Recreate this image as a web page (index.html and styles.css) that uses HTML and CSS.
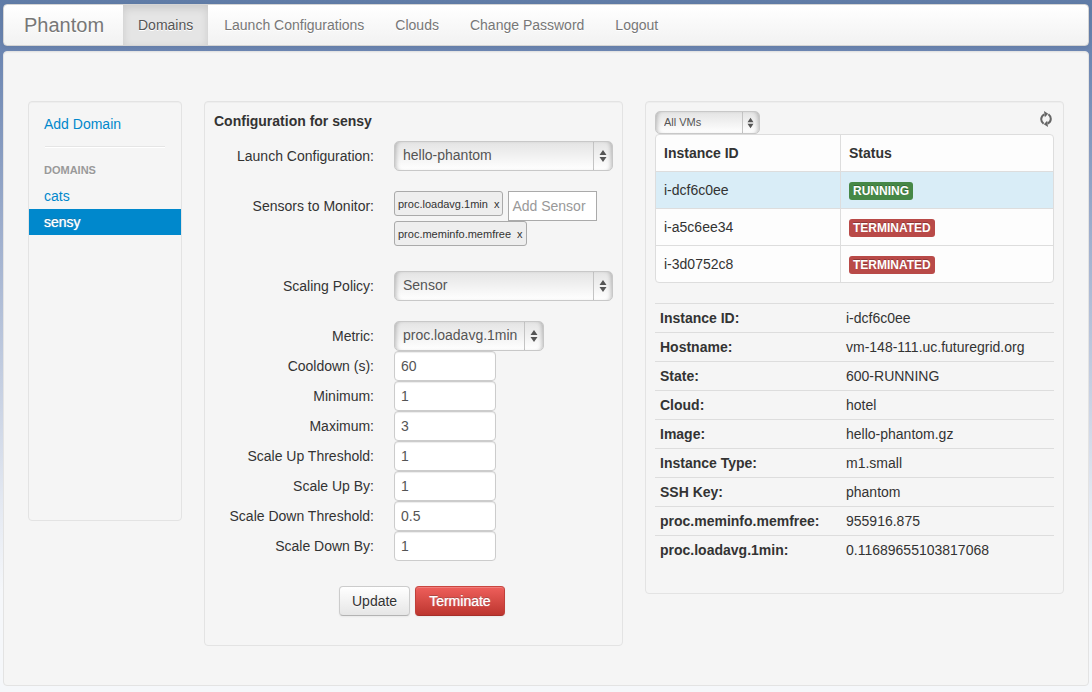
FILE: index.html
```html
<!DOCTYPE html>
<html lang="en">
<head>
<meta charset="utf-8">
<title>Phantom</title>
<link rel="stylesheet" href="styles.css">
</head>
<body>
<header class="navbar">
  <a class="brand" href="#">Phantom</a>
  <nav class="nav">
    <a class="nav-link active" href="#">Domains</a>
    <a class="nav-link" href="#">Launch Configurations</a>
    <a class="nav-link" href="#">Clouds</a>
    <a class="nav-link" href="#">Change Password</a>
    <a class="nav-link" href="#">Logout</a>
  </nav>
</header>

<main class="page">
  <aside class="panel sidebar">
    <a class="side-link" href="#">Add Domain</a>
    <hr class="divider">
    <h2 class="side-header">Domains</h2>
    <a class="side-link" href="#">cats</a>
    <a class="side-link active" href="#">sensy</a>
  </aside>

  <form class="panel config">
    <h1 class="config-title">Configuration for sensy</h1>
    <div class="row spaced">
      <label class="label" for="launch">Launch Configuration:</label>
      <span class="select">
        <select id="launch"><option>hello-phantom</option></select>
        <svg class="arrows" viewBox="0 0 8 14"><path d="M4 1l3.500 5H.5zM4 13l3.500-5H.5z"/></svg>
      </span>
    </div>
    <div class="row spaced">
      <label class="label" for="sensor">Sensors to Monitor:</label>
      <div class="tags">
        <span class="tag">proc.loadavg.1min <button class="tag-remove" type="button" aria-label="Remove proc.loadavg.1min">x</button></span>
        <input class="tag-input" id="sensor" type="text" placeholder="Add Sensor">
        <span class="tag">proc.meminfo.memfree <button class="tag-remove" type="button" aria-label="Remove proc.meminfo.memfree">x</button></span>
      </div>
    </div>
    <div class="row spaced">
      <label class="label" for="policy">Scaling Policy:</label>
      <span class="select">
        <select id="policy"><option>Sensor</option></select>
        <svg class="arrows" viewBox="0 0 8 14"><path d="M4 1l3.500 5H.5zM4 13l3.500-5H.5z"/></svg>
      </span>
    </div>
    <div class="row">
      <label class="label" for="metric">Metric:</label>
      <span class="select select-metric">
        <select id="metric"><option>proc.loadavg.1min</option></select>
        <svg class="arrows" viewBox="0 0 8 14"><path d="M4 1l3.500 5H.5zM4 13l3.500-5H.5z"/></svg>
      </span>
    </div>
    <div class="row">
      <label class="label" for="cooldown">Cooldown (s):</label>
      <input class="field" id="cooldown" type="text" value="60">
    </div>
    <div class="row">
      <label class="label" for="minimum">Minimum:</label>
      <input class="field" id="minimum" type="text" value="1">
    </div>
    <div class="row">
      <label class="label" for="maximum">Maximum:</label>
      <input class="field" id="maximum" type="text" value="3">
    </div>
    <div class="row">
      <label class="label" for="up-threshold">Scale Up Threshold:</label>
      <input class="field" id="up-threshold" type="text" value="1">
    </div>
    <div class="row">
      <label class="label" for="up-by">Scale Up By:</label>
      <input class="field" id="up-by" type="text" value="1">
    </div>
    <div class="row">
      <label class="label" for="down-threshold">Scale Down Threshold:</label>
      <input class="field" id="down-threshold" type="text" value="0.5">
    </div>
    <div class="row">
      <label class="label" for="down-by">Scale Down By:</label>
      <input class="field" id="down-by" type="text" value="1">
    </div>
    <div class="actions">
      <button class="btn" type="button">Update</button>
      <button class="btn btn-danger" type="button">Terminate</button>
    </div>
  </form>

  <section class="panel instances">
    <div class="toolbar">
      <span class="select select-small">
        <select aria-label="Filter VMs"><option>All VMs</option></select>
        <svg class="arrows" viewBox="0 0 8 14"><path d="M4 1l3.500 5H.5zM4 13l3.500-5H.5z"/></svg>
      </span>
      <button class="refresh" type="button" aria-label="Refresh">
        <svg viewBox="0 0 14 16" width="14" height="16">
          <path class="arc" d="M3.600 12.800C.2 10.200.4 5.400 4.400 3.300M8.400 3.200C11.800 5.800 11.600 10.600 7.600 12.700"/>
          <path class="head" d="M4 0L8.200 2.800 4.800 6.200zM8 16L3.800 13.200 7.200 9.800z"/>
        </svg>
      </button>
    </div>
    <table class="vm-table">
      <thead>
        <tr><th>Instance ID</th><th>Status</th></tr>
      </thead>
      <tbody>
        <tr class="selected"><td>i-dcf6c0ee</td><td><span class="badge badge-ok">RUNNING</span></td></tr>
        <tr><td>i-a5c6ee34</td><td><span class="badge">TERMINATED</span></td></tr>
        <tr><td>i-3d0752c8</td><td><span class="badge">TERMINATED</span></td></tr>
      </tbody>
    </table>
    <table class="details">
      <tbody>
        <tr><th>Instance ID:</th><td>i-dcf6c0ee</td></tr>
        <tr><th>Hostname:</th><td>vm-148-111.uc.futuregrid.org</td></tr>
        <tr><th>State:</th><td>600-RUNNING</td></tr>
        <tr><th>Cloud:</th><td>hotel</td></tr>
        <tr><th>Image:</th><td>hello-phantom.gz</td></tr>
        <tr><th>Instance Type:</th><td>m1.small</td></tr>
        <tr><th>SSH Key:</th><td>phantom</td></tr>
        <tr><th>proc.meminfo.memfree:</th><td>955916.875</td></tr>
        <tr><th>proc.loadavg.1min:</th><td>0.11689655103817068</td></tr>
      </tbody>
    </table>
  </section>
</main>
</body>
</html>
```
FILE: styles.css
```css
* {
  box-sizing: border-box;
}

body {
  margin: 0;
  padding: 4px 3px 6px;
  font: 14px/20px "Liberation Sans", Arial, sans-serif;
  color: #333;
  background: #f5f7fa linear-gradient(#607ca7 0, #6b85b1 50px, #a0b0ce 240px, #e3e8f1 500px, #f5f7fa 590px) no-repeat;
}

a {
  color: #08c;
  text-decoration: none;
}

input,
select,
button {
  margin: 0;
  font: inherit;
  color: #555;
}

.navbar {
  display: flex;
  height: 42px;
  margin-bottom: 5px;
  border: 1px solid #d4d4d4;
  border-radius: 4px;
  background: linear-gradient(#fff, #f2f2f2);
  box-shadow: 0 1px 4px rgba(0, 0, 0, 0.07);
}

.brand {
  width: 119px;
  padding: 10px 0 10px 20px;
  font-size: 20px;
  color: #777;
  text-shadow: 0 1px 0 #fff;
}

.nav {
  display: flex;
  gap: 1px;
}

.nav-link {
  padding: 10px 15px;
  color: #777;
  text-shadow: 0 1px 0 #fff;
}

.nav-link.active {
  color: #555;
  background: #e5e5e5;
  box-shadow: inset 0 3px 8px rgba(0, 0, 0, 0.125);
}

.page,
.panel {
  border: 1px solid #e3e3e3;
  border-radius: 4px;
  background: #f5f5f5;
  box-shadow: inset 0 1px 1px rgba(0, 0, 0, 0.03);
}

.page {
  display: grid;
  grid-template-columns: 154fr 419fr 419fr;
  gap: 22px;
  align-items: start;
  padding: 49px 24px 39px;
}

.panel {
  min-width: 0;
  padding: 9px;
}

.sidebar {
  min-height: 420px;
  padding: 9px 0;
}

.side-link,
.side-header {
  display: block;
  margin: 0;
  padding: 3px 15px;
}

.side-link.active {
  color: #fff;
  background: #08c;
  text-shadow: 0 -1px 0 rgba(0, 0, 0, 0.2), 0 0 1px #fff;
}

.side-header {
  font-size: 11px;
  line-height: 20px;
  color: #999;
  text-transform: uppercase;
  text-shadow: 0 1px 0 rgba(255, 255, 255, 0.5);
}

.divider {
  height: 2px;
  margin: 9px 16px;
  border: 0;
  border-bottom: 1px solid #fff;
  background: #e5e5e5;
}

.config-title {
  margin: 0 0 10px;
  font-size: 14px;
  line-height: 20px;
}

.row {
  display: grid;
  grid-template-columns: 160px minmax(0, 1fr);
  column-gap: 20px;
  align-items: start;
}

.spaced {
  margin-bottom: 20px;
}

.label {
  padding: 5px 0;
  text-align: right;
}

.select {
  position: relative;
  display: block;
}

.select select {
  display: block;
  width: 100%;
  height: 30px;
  padding: 0 24px 2px 8px;
  border: 1px solid #c8c8c8;
  border-radius: 5px;
  appearance: none;
  background:
    linear-gradient(#c4c4c4, #c4c4c4) right 18px top 0 / 1px 100% no-repeat,
    linear-gradient(#e4e4e4, #fff);
  box-shadow: inset 4px 0 4px -3px rgba(0, 0, 0, 0.25), inset -4px 0 4px -3px rgba(0, 0, 0, 0.25);
}

.arrows {
  position: absolute;
  top: 8px;
  right: 6px;
  width: 8px;
  height: 14px;
  fill: #555;
  pointer-events: none;
}

.select-metric {
  width: 150px;
}

.select-metric select {
  padding-right: 18px;
}

.select-small {
  width: 105px;
}

.select-small select {
  height: 23px;
  padding-bottom: 1px;
  font-size: 11px;
  background:
    linear-gradient(#c4c4c4, #c4c4c4) right 16px top 0 / 1px 100% no-repeat,
    linear-gradient(#e4e4e4, #fff);
}

.select-small .arrows {
  top: 6px;
  width: 7px;
  height: 12px;
}

.tags {
  display: flex;
  flex-wrap: wrap;
  align-items: flex-start;
  column-gap: 5px;
}

.tag {
  display: flex;
  gap: 6px;
  height: 25px;
  margin-bottom: 5px;
  padding: 0 3px;
  border: 1px solid #aaa;
  border-radius: 3px;
  background: #eee;
  font-size: 11px;
  line-height: 25px;
}

.tag-remove {
  padding: 0;
  border: 0;
  background: none;
  color: #333;
}

.tag-input {
  width: 89px;
  height: 30px;
  padding: 0 3px;
  border: 1px solid #aaa;
  background: #fff;
}

.tag-input::placeholder {
  color: #999;
}

.field {
  width: 102px;
  height: 30px;
  padding: 4px 6px;
  border: 1px solid #ccc;
  border-radius: 4px;
  background: #fff;
  box-shadow: inset 0 1px 1px rgba(0, 0, 0, 0.075);
}

.actions {
  display: flex;
  gap: 5px;
  padding: 25px 0 20px 125px;
}

.btn {
  padding: 4px 12px;
  border: 1px solid #ccc;
  border-bottom-color: #b3b3b3;
  border-radius: 4px;
  color: #333;
  background: linear-gradient(#fff, #e6e6e6);
  box-shadow: inset 0 1px 0 rgba(255, 255, 255, 0.2), 0 1px 2px rgba(0, 0, 0, 0.05);
  text-shadow: 0 1px 1px rgba(255, 255, 255, 0.75);
}

.btn-danger {
  padding: 4px 13px;
  border-color: #c9453f #c0403a #a52f29;
  color: #fff;
  background: linear-gradient(#ee5f5b, #bd362f);
  text-shadow: 0 -1px 0 rgba(0, 0, 0, 0.25), 0 0 1px #fff;
}

.toolbar {
  display: flex;
  justify-content: space-between;
  align-items: flex-start;
}

.refresh {
  height: 16px;
  padding: 0;
  border: 0;
  background: none;
}

.refresh svg {
  display: block;
}

.arc {
  fill: none;
  stroke: #666;
  stroke-width: 2;
}

.head {
  fill: #666;
}

.vm-table,
.details {
  width: 100%;
  border-spacing: 0;
  text-align: left;
  table-layout: fixed;
}

.vm-table {
  margin-bottom: 20px;
  border: 1px solid #ddd;
  border-radius: 4px;
  background: #fdfdfd;
}

.vm-table th,
.vm-table td {
  padding: 8px;
}

.vm-table td {
  border-top: 1px solid #ddd;
}

.vm-table th + th,
.vm-table td + td {
  border-left: 1px solid #ddd;
}

.vm-table th:first-child {
  width: 184px;
}

.selected td {
  background: #d9edf7;
}

.badge {
  display: inline-block;
  padding: 2px 4px;
  border-radius: 3px;
  background: #b94a48;
  color: #fff;
  font-size: 12px;
  font-weight: bold;
  line-height: 14px;
  text-shadow: 0 -1px 0 rgba(0, 0, 0, 0.25);
}

.badge-ok {
  background: #468847;
}

.details {
  margin-bottom: 20px;
}

.details th,
.details td {
  padding: 4px 5px;
  border-top: 1px solid #ddd;
}

.details th {
  width: 186px;
}
```
